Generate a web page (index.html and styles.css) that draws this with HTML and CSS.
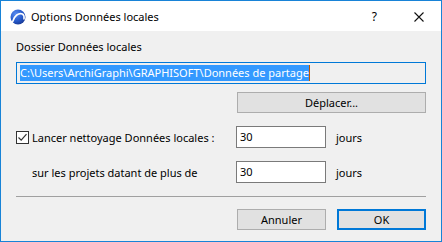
FILE: index.html
```html
<!DOCTYPE html>
<html lang="fr">
<head>
<meta charset="utf-8">
<title>Options Données locales</title>
<link rel="stylesheet" href="styles.css">
</head>
<body>
<div class="window">
  <div class="titlebar">
    <svg class="app-icon" width="16" height="16" viewBox="0 0 16 16" aria-hidden="true">
      <defs>
        <radialGradient id="g" cx="0.35" cy="0.3" r="0.8">
          <stop offset="0" stop-color="#5a8cf0"/>
          <stop offset="0.6" stop-color="#2457c8"/>
          <stop offset="1" stop-color="#18348a"/>
        </radialGradient>
      </defs>
      <circle cx="8" cy="8" r="7.5" fill="url(#g)"/>
      <path d="M2.5 13 C4 6.5 9 3.5 12.5 5 C14 6 14.3 8 14 10" fill="none" stroke="#fff" stroke-width="1.6" stroke-linecap="round"/>
    </svg>
    <span class="title">Options Données locales</span>
    <span class="spacer"></span>
    <span class="help">?</span>
    <svg class="close" width="10" height="10" viewBox="0 0 10 10" aria-hidden="true">
      <path d="M0.5 0.5 L9.5 9.5 M9.5 0.5 L0.5 9.5" stroke="#111" stroke-width="1.1"/>
    </svg>
  </div>
  <div class="content">
    <div class="label">Dossier Données locales</div>
    <div class="path-field"><span class="sel">C:\Users\ArchiGraphi\GRAPHISOFT\Données de partage</span><span class="caret"></span></div>
    <div class="move-row"><button class="btn move">Déplacer...</button></div>
    <div class="grid">
      <label class="check-label"><span class="checkbox"><svg width="11" height="11" viewBox="0 0 11 11"><path d="M1.5 5.5 L4.2 8.2 L9.5 2.2" fill="none" stroke="#333" stroke-width="1.2"/></svg></span>Lancer nettoyage Données locales :</label>
      <div class="num">30</div>
      <div class="unit">jours</div>
      <div class="sub-label">sur les projets datant de plus de</div>
      <div class="num">30</div>
      <div class="unit">jours</div>
    </div>
    <div class="sep"></div>
    <div class="actions">
      <button class="btn">Annuler</button>
      <button class="btn ok">OK</button>
    </div>
  </div>
</div>
</body>
</html>
```
FILE: styles.css
```css
* { box-sizing: border-box; }
html, body { margin: 0; padding: 0; background: #fff; }
body {
  font-family: "Noto Sans", "Open Sans", sans-serif;
  font-size: 11px;
  color: #000;
}
.window {
  width: 442px;
  height: 242px;
  border: 1px solid #1883d7;
  background: #f0f0f0;
  overflow: hidden;
}
.titlebar {
  height: 30px;
  background: #fff;
  display: flex;
  align-items: center;
  padding-left: 9px;
}
.app-icon { flex: none; margin-top: 1px; }
.title {
  margin-left: 5px;
  font-size: 11px;
  color: #000;
  margin-top: 1px;
}
.spacer { flex: 1; }
.help {
  font-size: 12px;
  margin-right: 37px;
  margin-top: 1px;
}
.close { margin-right: 17px; margin-top: 1px; }
.content {
  padding: 0 15px;
}
.label {
  margin-top: 8px;
  line-height: 16px;
  height: 16px;
}
.path-field {
  margin-top: 7px;
  height: 22px;
  border: 1px solid #0078d7;
  background: #f0f0f0;
  display: flex;
  align-items: center;
  padding-left: 3px;
}
.sel {
  background: #3399ff;
  color: #fff;
  line-height: 16px;
  height: 16px;
  white-space: nowrap;
}
.caret {
  width: 1px;
  height: 16px;
  background: #c05800;
}
.move-row {
  margin-top: 8px;
  display: flex;
  justify-content: flex-end;
}
.btn {
  font-family: inherit;
  font-size: 11px;
  color: #000;
  background: #e1e1e1;
  border: 1px solid #adadad;
  height: 21px;
  width: 89px;
  padding: 0;
  line-height: 17px;
}
.move { width: 189px; }
.ok {
  border: 2px solid #0078d7;
  line-height: 15px;
}
.grid {
  margin-top: 13px;
  display: grid;
  grid-template-columns: 220px 90px auto;
  grid-auto-rows: 22px;
  row-gap: 13px;
  align-items: center;
}
.check-label {
  display: flex;
  align-items: center;
  white-space: nowrap;
}
.checkbox {
  width: 13px;
  height: 13px;
  border: 1px solid #333;
  background: #fff;
  margin-right: 3px;
  display: flex;
  align-items: center;
  justify-content: center;
}
.checkbox svg { display: block; }
.sub-label { padding-left: 16px; white-space: nowrap; }
.num {
  height: 22px;
  border: 1px solid #7a7a7a;
  background: #fff;
  padding-left: 3px;
  line-height: 20px;
}
.unit { padding-left: 10px; }
.sep {
  margin-top: 13px;
  height: 1px;
  background: #a0a0a0;
}
.actions {
  margin-top: 12px;
  display: flex;
  justify-content: flex-end;
  gap: 11px;
}
```
